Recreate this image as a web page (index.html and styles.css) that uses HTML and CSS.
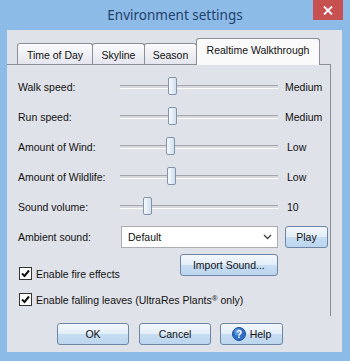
FILE: index.html
```html
<!DOCTYPE html>
<html lang="en">
<head>
    <meta charset="UTF-8">
    <title>Environment settings</title>
    <link rel="stylesheet" href="styles.css">
</head>
<body>
    <div class="window">
        <div class="titlebar">
            <span class="title">Environment settings</span>
            <button class="close-btn" aria-label="Close">
                <svg width="10" height="9" viewBox="0 0 10 9"><path d="M1 0.5 L9 8.5 M9 0.5 L1 8.5" stroke="#fff" stroke-width="1.8"/></svg>
            </button>
        </div>
        <div class="client">
            <div class="tabs">
                <div class="tab tab-time">Time of Day</div>
                <div class="tab tab-sky">Skyline</div>
                <div class="tab tab-season">Season</div>
                <div class="tab tab-active">Realtime Walkthrough</div>
            </div>
            <div class="panel">
                <div class="slider-row">
                    <span>Walk speed:</span>
                    <div class="track"><span class="thumb" style="left: 48px"></span></div>
                    <span class="value">Medium</span>
                </div>
                <div class="slider-row">
                    <span>Run speed:</span>
                    <div class="track"><span class="thumb" style="left: 48px"></span></div>
                    <span class="value">Medium</span>
                </div>
                <div class="slider-row">
                    <span>Amount of Wind:</span>
                    <div class="track"><span class="thumb" style="left: 46px"></span></div>
                    <span class="value low">Low</span>
                </div>
                <div class="slider-row">
                    <span>Amount of Wildlife:</span>
                    <div class="track"><span class="thumb" style="left: 47px"></span></div>
                    <span class="value low">Low</span>
                </div>
                <div class="slider-row">
                    <span>Sound volume:</span>
                    <div class="track"><span class="thumb" style="left: 23px"></span></div>
                    <span class="value low">10</span>
                </div>
                <div class="ambient-row">
                    <span>Ambient sound:</span>
                    <div class="select">
                        <span>Default</span>
                        <svg width="9" height="6" viewBox="0 0 9 6"><path d="M1 1 L4.5 4.5 L8 1" fill="none" stroke="#444" stroke-width="1.4"/></svg>
                    </div>
                    <button class="btn play-btn">Play</button>
                </div>
                <div class="fire-row">
                    <label class="check"><span class="box"><svg width="11" height="11" viewBox="0 0 11 11"><path d="M2 5.5 L4.5 8 L9 2.5" fill="none" stroke="#111" stroke-width="2"/></svg></span>Enable fire effects</label>
                    <button class="btn import-btn">Import Sound...</button>
                </div>
                <div class="leaves-row">
                    <label class="check"><span class="box"><svg width="11" height="11" viewBox="0 0 11 11"><path d="M2 5.5 L4.5 8 L9 2.5" fill="none" stroke="#111" stroke-width="2"/></svg></span><span>Enable falling leaves (UltraRes Plants<sup>®</sup> only)</span></label>
                </div>
            </div>
            <div class="buttons">
                <button class="btn ok-btn">OK</button>
                <button class="btn cancel-btn">Cancel</button>
                <button class="btn help-btn">
                    <svg width="14" height="14" viewBox="0 0 14 14">
                        <circle cx="7" cy="7" r="6.5" fill="#2f6fc6" stroke="#1c4f98"/>
                        <circle cx="6" cy="5" r="3.5" fill="#7fb2ee" opacity="0.6"/>
                        <text x="7" y="10.5" font-size="10" font-weight="bold" text-anchor="middle" fill="#fff" font-family="Liberation Sans, sans-serif">?</text>
                    </svg>
                    Help
                </button>
            </div>
        </div>
    </div>
</body>
</html>
```

FILE: styles.css
```css
body {
    margin: 0;
    font-family: "Liberation Sans", Arial, sans-serif;
    font-size: 10.5px;
    color: #111;
}
.window {
    width: 350px;
    height: 361px;
    background: #8dbbe8;
    overflow: hidden;
}
.titlebar {
    height: 30px;
    display: grid;
    grid-template-columns: 1fr auto 1fr;
}
.title {
    grid-column: 2;
    font-family: "Noto Sans", "Open Sans", sans-serif;
    font-size: 13.5px;
    color: #22406a;
    line-height: 30px;
}
.close-btn {
    grid-column: 3;
    justify-self: end;
    align-self: start;
    width: 30px;
    height: 20px;
    margin-right: 7px;
    padding: 0;
    border: none;
    background: #c75050;
    display: flex;
    align-items: center;
    justify-content: center;
}
.client {
    margin: 0 8px 0 7px;
    height: 322px;
    background: #e0e2e9;
}
.tabs {
    height: 34px;
    display: flex;
    align-items: flex-end;
    padding-left: 10px;
}
.tab {
    box-sizing: border-box;
    height: 21px;
    border: 1px solid #8c8f98;
    border-bottom: none;
    border-radius: 3px 3px 0 0;
    background: linear-gradient(#fbfbfd, #e4e5ee);
    display: flex;
    align-items: center;
    justify-content: center;
    padding-top: 2px;
}
.tab + .tab {
    margin-left: -1px;
}
.tab-time {
    width: 76px;
}
.tab-sky {
    width: 53px;
}
.tab-season {
    width: 53px;
}
.tab-active {
    position: relative;
    width: 124px;
    height: 27px;
    margin-bottom: -1px;
    margin-left: 0;
    padding-top: 0;
    padding-bottom: 4px;
    background: #fafafa;
}
.panel {
    box-sizing: border-box;
    width: 324px;
    height: 252px;
    border-top: 1px solid #8c8f98;
    border-right: 1px solid #8c8f98;
    padding: 7px 0 0 11px;
}
.slider-row {
    height: 30px;
    display: grid;
    grid-template-columns: 102px 158px auto;
    align-items: center;
}
.track {
    position: relative;
    height: 2px;
    border-top: 1px solid #a4a6ab;
    border-bottom: 1px solid #fff;
    background: #d6d8de;
}
.thumb {
    position: absolute;
    top: -9px;
    width: 7px;
    height: 16px;
    border: 1px solid #8393a8;
    border-radius: 2px;
    background: linear-gradient(90deg, #f6f9fc, #cfe0f1);
}
.value {
    padding-left: 7px;
}
.value.low {
    padding-left: 9px;
}
.ambient-row {
    margin-top: 3px;
    height: 24px;
    display: flex;
    align-items: center;
}
.ambient-row > span {
    width: 103px;
}
.select {
    box-sizing: border-box;
    width: 157px;
    height: 22px;
    border: 1px solid #abadb3;
    background: #fff;
    display: flex;
    align-items: center;
    justify-content: space-between;
    padding: 0 5px 0 6px;
}
.btn {
    box-sizing: border-box;
    height: 22px;
    padding: 0;
    border: 1px solid #6d86a6;
    border-radius: 3px;
    background: linear-gradient(#f3f7fb 0%, #e3eef9 48%, #c7ddf2 52%, #bcd6ef 100%);
    font-family: inherit;
    font-size: 10.5px;
    color: #111;
    display: flex;
    align-items: center;
    justify-content: center;
    gap: 4px;
}
.play-btn {
    width: 43px;
    margin-left: 7px;
}
.fire-row {
    margin-top: 5px;
    height: 27px;
    display: flex;
    align-items: flex-end;
}
.import-btn {
    align-self: flex-start;
    width: 98px;
    margin-left: 60px;
}
.check {
    display: flex;
    align-items: center;
    gap: 4px;
    height: 15px;
}
.box {
    box-sizing: border-box;
    width: 13px;
    height: 13px;
    margin-left: 1px;
    border: 1px solid #333;
    background: #fff;
    display: flex;
    align-items: center;
    justify-content: center;
}
.check sup {
    font-size: 8px;
    line-height: 0;
    vertical-align: 3px;
}
.leaves-row {
    margin-top: 11px;
}
.buttons {
    display: flex;
    gap: 10px;
    padding: 7px 0 0 50px;
}
.ok-btn {
    width: 72px;
}
.cancel-btn {
    width: 72px;
}
.help-btn {
    width: 63px;
    margin-left: -1px;
}
```
